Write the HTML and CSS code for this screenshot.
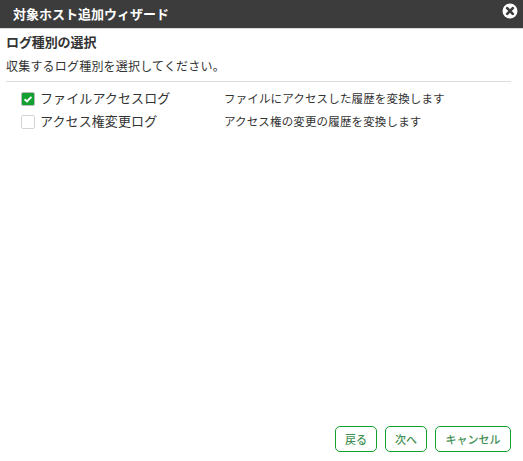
FILE: index.html
```html
<!DOCTYPE html>
<html lang="ja">
<head>
    <meta charset="UTF-8">
    <title>対象ホスト追加ウィザード</title>
    <link rel="stylesheet" href="styles.css">
</head>
<body>
    <div class="dialog">
        <div class="titlebar">
            <span class="title">対象ホスト追加ウィザード</span>
            <svg class="close" width="16" height="16" viewBox="0 0 16 16">
                <circle cx="8" cy="8" r="7.5" fill="#fff"/>
                <path d="M5.2 5.2L10.8 10.8M10.8 5.2L5.2 10.8" stroke="#3c3c3c" stroke-width="2.6" stroke-linecap="round"/>
            </svg>
        </div>
        <div class="content">
            <h2>ログ種別の選択</h2>
            <p class="lead">収集するログ種別を選択してください。</p>
            <div class="rows">
                <div class="row">
                    <span class="check checked">
                        <svg width="12" height="12" viewBox="0 0 12 12">
                            <path d="M2.6 6.2L5 8.4L9.4 3.9" fill="none" stroke="#fff" stroke-width="2"/>
                        </svg>
                    </span>
                    <span class="name">ファイルアクセスログ</span>
                    <span class="desc">ファイルにアクセスした履歴を変換します</span>
                </div>
                <div class="row">
                    <span class="check"></span>
                    <span class="name">アクセス権変更ログ</span>
                    <span class="desc">アクセス権の変更の履歴を変換します</span>
                </div>
            </div>
        </div>
        <div class="footer">
            <button class="button">戻る</button>
            <button class="button">次へ</button>
            <button class="button wide">キャンセル</button>
        </div>
    </div>
</body>
</html>
```

FILE: styles.css
```css
html, body {
    height: 100%;
}
body {
    margin: 0;
    background: #fff;
    font-family: "Roboto", "Noto Sans CJK JP", sans-serif;
    color: #333;
}
.dialog {
    display: flex;
    flex-direction: column;
    height: 461px;
}
.titlebar {
    display: flex;
    align-items: center;
    justify-content: space-between;
    flex: none;
    height: 29px;
    padding: 0 5px 1px 13px;
    box-sizing: border-box;
    background: #3c3c3c;
    border-bottom: 1px solid #d8d8d8;
}
.title {
    color: #fff;
    font-size: 13px;
    font-weight: bold;
}
.close {
    margin-top: -5px;
}
.content {
    flex: 1;
    padding: 5px 12px 0 6px;
}
h2 {
    margin: 0;
    font-size: 13px;
    line-height: 18px;
    font-weight: bold;
    letter-spacing: -0.1px;
}
.lead {
    margin: 6px 0 0;
    font-size: 12px;
    line-height: 18px;
    letter-spacing: 0.2px;
    padding-bottom: 5px;
    border-bottom: 1px solid #ddd;
}
.rows {
    padding: 5px 0 0 15px;
}
.row {
    display: flex;
    align-items: center;
    height: 23px;
}
.check {
    display: flex;
    align-items: center;
    justify-content: center;
    box-sizing: border-box;
    width: 14px;
    height: 14px;
    margin-right: 5px;
    border: 1px solid #d4d4d4;
    border-radius: 2px;
}
.check.checked {
    background: #12a12f;
    border-color: #bbb;
}
.name {
    width: 184px;
    padding-bottom: 2px;
    font-size: 13px;
    letter-spacing: 0.1px;
}
.desc {
    padding-bottom: 2px;
    font-size: 11.5px;
    letter-spacing: 0.15px;
}
.footer {
    display: flex;
    justify-content: flex-end;
    gap: 8px;
    flex: none;
    padding: 0 12px 9px 0;
}
.button {
    width: 42px;
    height: 26px;
    padding: 0;
    background: #fff;
    border: 1px solid #12a12f;
    border-radius: 5px;
    color: #3f8f55;
    font-family: inherit;
    font-size: 11px;
    font-weight: 500;
}
.button.wide {
    width: 76px;
}
```
